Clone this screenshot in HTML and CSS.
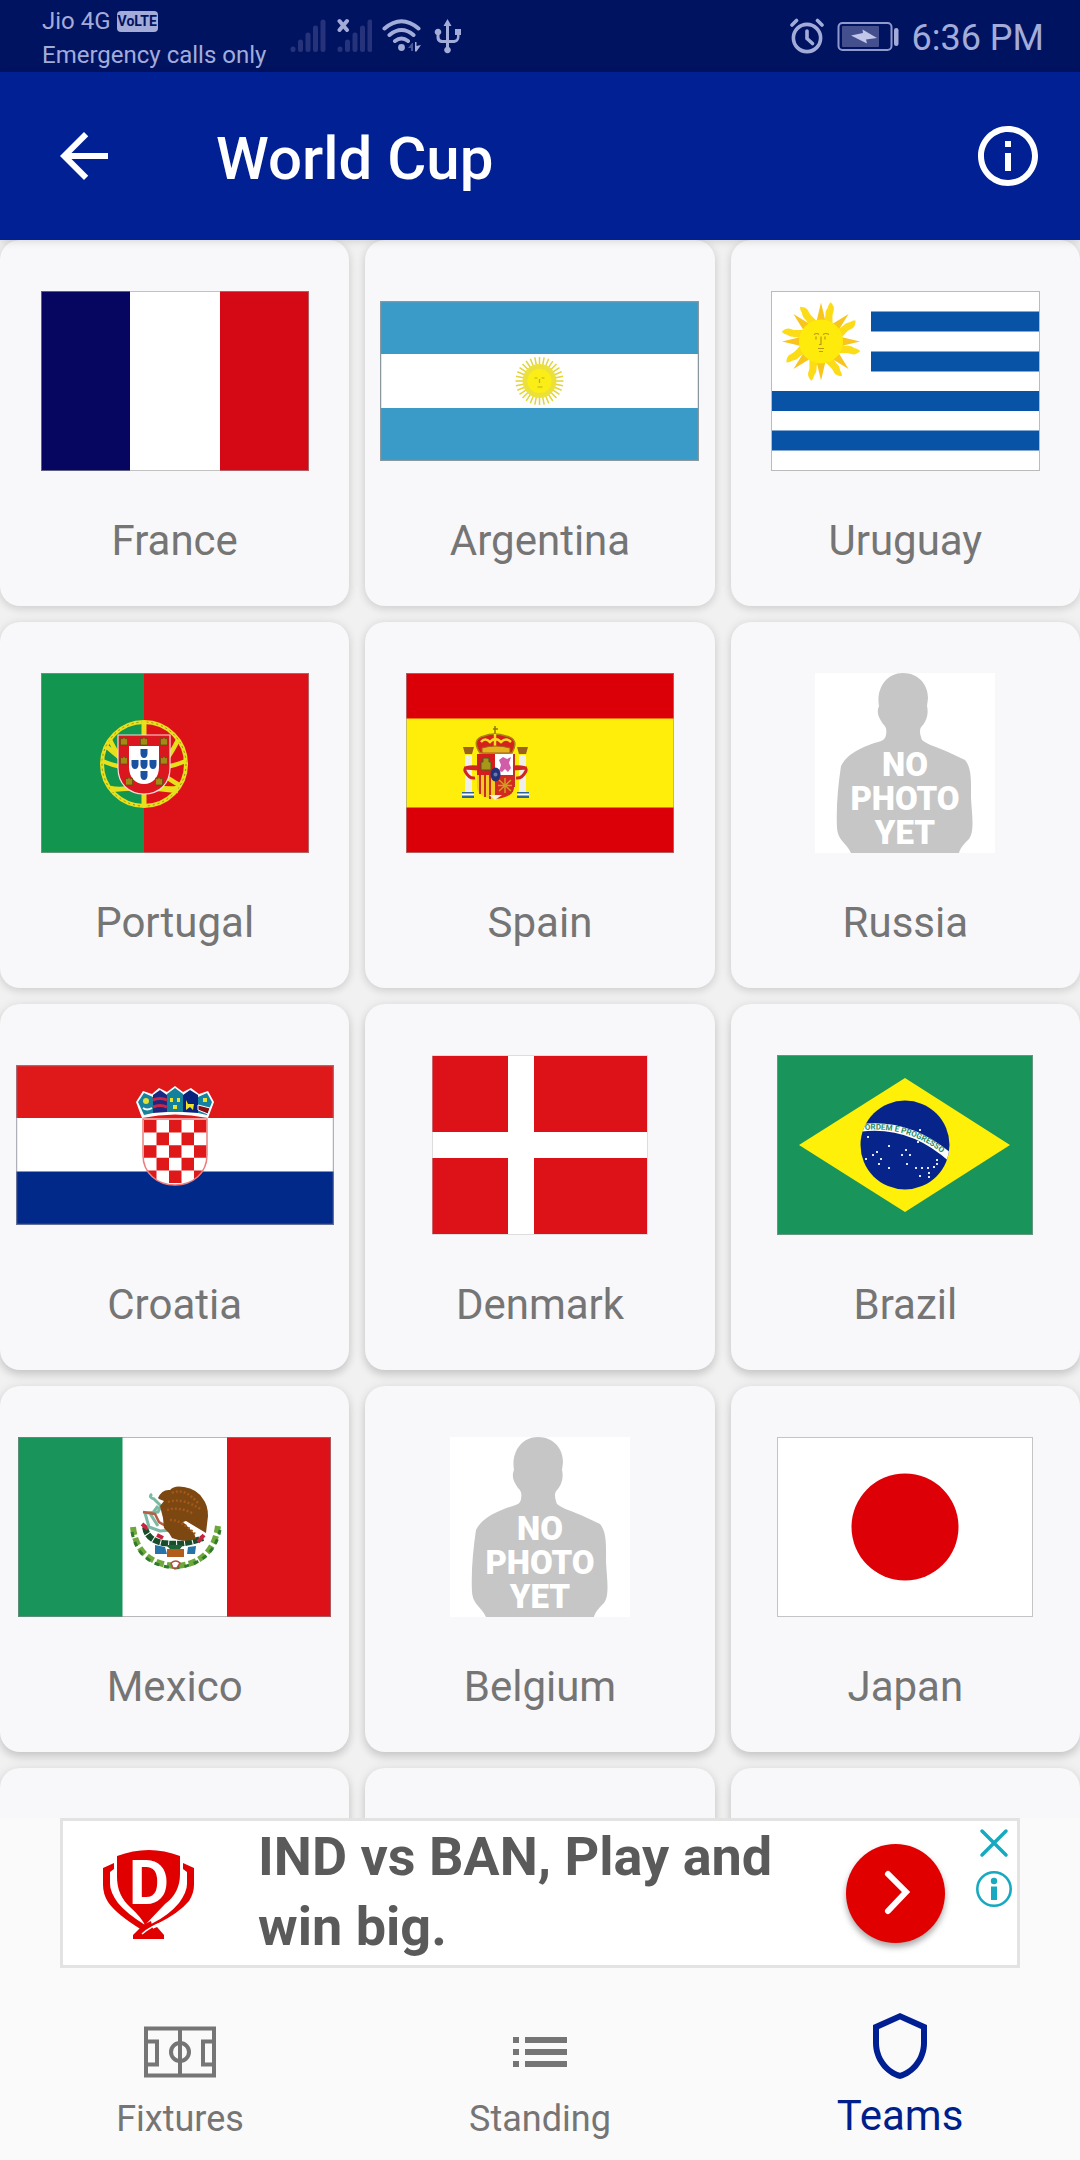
FILE: index.html
```html
<!DOCTYPE html>
<html lang="en">
<head>
<meta charset="utf-8">
<meta name="viewport" content="width=device-width, initial-scale=1">
<title>World Cup</title>
<link rel="stylesheet" href="styles.css">
</head>
<body>
<div class="status">
  <div class="carrier">
    <div class="carrier-line">Jio 4G <span class="volte">VoLTE</span></div>
    <div class="carrier-line">Emergency calls only</div>
  </div>
  <div class="status-icons">
    <svg width="37" height="36" viewBox="0 0 37 36" stroke="#26337a" stroke-width="5" stroke-linecap="round"><path d="M3 31v.5M10.500 24v7.500M18 17v14.500M25.500 10v21.500M33 4v27.500"/></svg>
    <svg width="35" height="36" viewBox="0 0 35 36" stroke="#26337a" stroke-width="5" stroke-linecap="round"><path d="M3 31v.5M10.500 24v7.500M18 17v14.500M25.500 10v21.500M33 4v27.500"/><path d="M2.500 3l7.500 9M10 3l-7.500 9" stroke="#a3acd9" stroke-width="4"/></svg>
    <svg width="40" height="36" viewBox="0 0 40 36" fill="none" stroke="#a3acd9" stroke-width="4" stroke-linecap="round"><path d="M2.500 10.500Q19.500-4 36.500 10.500M7.500 17Q19.500 7 31.500 17M13 23Q19.500 18 26 23"/><circle cx="19.500" cy="29.500" r="3.400" fill="#a3acd9" stroke="none"/><path d="M33 24h1.500v4l4.500-1-4.500 6.500H33z" fill="#a3acd9" stroke="none"/><path d="M31 25v8h-2v-3h-3l4-5z" fill="#4a5592" stroke="none"/></svg>
    <svg width="30" height="36" viewBox="0 0 30 36" fill="#a3acd9"><path d="M15.500 1l4 7h-2.500V22h4c3 0 4-1 4-4v-1h-2v-6h6v6h-1.500v1.500c0 4-2.500 6.500-6.500 6.500H17v4a3.300 3.300 0 1 1-3 0v-4h-3c-4.500 0-6.500-2-6.500-6v-2a3.300 3.300 0 1 1 3 0v1c0 3 1 4 4 4H14V8h-2.500z"/></svg>
  </div>
  <div class="status-right">
    <svg width="34" height="36" viewBox="0 0 34 36" fill="none" stroke="#a3acd9" stroke-width="3.600" stroke-linecap="round"><circle cx="17" cy="20" r="13.600"/><path d="M17 13v7.500l5.500 5"/><path d="M2 7l4.500-4.500M32 7l-4.500-4.500"/></svg>
    <svg width="62" height="36" viewBox="0 0 62 36" fill="none"><rect x="1.500" y="5" width="53" height="27" rx="4" stroke="#8f99cc" stroke-width="2"/><rect x="5" y="8" width="37" height="21" rx="1" fill="#444f8e"/><path d="M14 17.500L26 15l-.5-3.500L40 20l-11 1.500 1 4z" fill="#c0c7e8"/><rect x="57" y="10" width="4.500" height="18" rx="2.200" fill="#a3acd9"/></svg>
    <time class="clock">6:36 PM</time>
  </div>
</div>

<header class="appbar">
  <button class="icon-btn" aria-label="Back"><svg width="72" height="72" viewBox="0 0 24 24" fill="#fff"><path d="M20 11H7.830l5.590-5.590L12 4l-8 8 8 8 1.410-1.410L7.830 13H20v-2z"/></svg></button>
  <h1 class="title">World Cup</h1>
  <button class="icon-btn" aria-label="Information"><svg width="72" height="72" viewBox="0 0 24 24" fill="#fff"><path d="M11 7h2v2h-2zm0 4h2v6h-2zm1-9C6.480 2 2 6.480 2 12s4.480 10 10 10 10-4.480 10-10S17.520 2 12 2zm0 18c-4.410 0-8-3.590-8-8s3.590-8 8-8 8 3.590 8 8-3.590 8-8 8z"/></svg></button>
</header>

<main class="teams">
  <a class="card" href="#">
    <span class="flag"><svg width="268" height="180" viewBox="0 0 268 180"><rect width="268" height="180" fill="#fff"/><rect width="89" height="180" fill="#060560"/><rect x="179" width="89" height="180" fill="#d50816"/><rect x=".5" y=".5" width="267" height="179" fill="none" stroke="#999" stroke-opacity=".6"/></svg></span>
    <span class="name">France</span>
  </a>
  <a class="card" href="#">
    <span class="flag"><svg width="319" height="160" viewBox="0 0 319 160"><rect width="319" height="160" fill="#3a9bc8"/><rect y="53" width="319" height="54" fill="#fff"/>
      <g transform="translate(159.500 80)"><g stroke="#e3d437" stroke-width="1.500"><path id="rays" d="M0-24V24M-24 0H24M-17-17L17 17M17-17L-17 17"/><use href="#rays" transform="rotate(11.250)"/><use href="#rays" transform="rotate(22.500)"/><use href="#rays" transform="rotate(33.750)"/></g><circle r="17" fill="#ece13a"/><circle r="12" fill="#fbee16"/><path d="M-5-3h3M2-3h3M0-2v4M-2 6h5" stroke="#c4ae18" stroke-width="1.200"/></g>
      <rect x=".5" y=".5" width="318" height="159" fill="none" stroke="#8a979f" stroke-width="1.500"/></svg></span>
    <span class="name">Argentina</span>
  </a>
  <a class="card" href="#">
    <span class="flag"><svg width="269" height="180" viewBox="0 0 269 180"><rect width="269" height="180" fill="#fff"/><path d="M100 20.500h168v20H100zM100 60.500h168v20H100zM1 100h267v20H1zM1 139.500h267v20H1z" fill="#0853a5"/>
      <g transform="translate(50 50.500)"><g fill="#f8c51d"><path id="ray" d="M-5-18L0-39 5-18zM-5 18L0 39 5 18zM-18-5L-39 0-18 5zM18-5L39 0 18 5z"/><use href="#ray" transform="rotate(45)"/></g>
      <g fill="#fbdc16"><path id="wave" d="M-6-18c3-6-2-9-1-14 1-3-1-4 1-8 4 2 6 4 6 8s3 8 5 14zM6 18c-3 6 2 9 1 14-1 3 1 4-1 8-4-2-6-4-6-8s-3-8-5-14zM18-6c6 3 9-2 14-1 3 1 4-1 8 1-2 4-4 6-8 6s-8 3-14 5zM-18 6c-6-3-9 2-14 1-3-1-4 1-8-1 2-4 4-6 8-6s8-3 14-5z" transform="rotate(22.500)"/><use href="#wave" transform="rotate(45)"/></g>
      <circle r="22" fill="#ffeb0b"/><path d="M-7-7q3-2 5 0M2-7q3-2 6 0M-5-5v3M4-5v3M0-5v8h-2M-3 7h6M-2 10h4" fill="none" stroke="#b79a18" stroke-width="1.200"/></g>
      <rect x=".5" y=".5" width="268" height="179" fill="none" stroke="#bbb"/></svg></span>
    <span class="name">Uruguay</span>
  </a>
  <a class="card" href="#">
    <span class="flag"><svg width="268" height="180" viewBox="0 0 268 180"><rect width="268" height="180" fill="#dd1219"/><rect width="103" height="180" fill="#11954f"/>
      <g transform="translate(103 91)"><g fill="none" stroke="#e8e01c"><circle r="42" stroke-width="4"/><circle r="42" stroke="#8f8a1a" stroke-width="1" stroke-dasharray="2 3"/><path d="M0-43V43" stroke-width="5"/><path d="M-42-3Q0 14 42-3M-34-24Q-8 30 34 24M-34 24Q6 32 34-24M-37-17L-12 4M14 8L35 21M-34 26Q0 22 34 27" stroke-width="4.500"/></g>
      <path d="M-26-29H26V4C26 20 15 30 0 30S-26 20-26 4z" fill="#da171e" stroke="#f6dcda" stroke-width="1.200"/><path d="M-15-18H15V3C15 13 9 20 0 20S-15 13-15 3z" fill="#fff"/>
      <g fill="#1b529f"><path id="quina" d="M-3.500-4h7v5Q3 5 0 5T-3.500 1z"/><use href="#quina" y="-11"/><use href="#quina" y="11"/><use href="#quina" x="-9"/><use href="#quina" x="9"/></g>
      <defs><path id="castle" d="M-3.500 4v-7l2 1 1.500-2 1.500 2 2-1v7z"/></defs><g fill="#a28a14" stroke="#5e4a10" stroke-width=".7"><use href="#castle" x="-20" y="-23"/><use href="#castle" y="-23"/><use href="#castle" x="20" y="-23"/><use href="#castle" x="-20" y="-4"/><use href="#castle" x="20" y="-4"/><use href="#castle" x="-15" y="17"/><use href="#castle" x="15" y="17"/></g></g>
      <rect x=".5" y=".5" width="267" height="179" fill="none" stroke="#999" stroke-opacity=".6"/></svg></span>
    <span class="name">Portugal</span>
  </a>
  <a class="card" href="#">
    <span class="flag"><svg width="268" height="180" viewBox="0 0 268 180"><rect width="268" height="180" fill="#db0007"/><rect y="45.500" width="268" height="89" fill="#ffee0a"/>
      <path d="M89 53v8M87 56h5" stroke="#8c7a15" stroke-width="1.500"/><path d="M74 80q-9-14 4-17 10-4 22 0 14 3 6 17z" fill="#d3221d" stroke="#a98313" stroke-width="1.500"/><path d="M75 69q4-5 9 0 5-6 11 0 5-5 10 0M89 61v14" fill="none" stroke="#ffdc23" stroke-width="2.500"/><path d="M76 75q14-4 28 0v5H76z" fill="#e5b41c" stroke="#a4601a"/>
      <path d="M71 81h18v21H71z" fill="#d61d1d"/><path d="M89 81h19v21H89z" fill="#fff"/><path d="M71 102h18v24c-10-1-18-4-18-12z" fill="#f4ca22"/><path d="M89 102h19v12c0 8-8 11-19 12z" fill="#d22a22"/><path d="M74 102v19M79 102v22M84 102v24M108 81v33" stroke="#c92f20" stroke-width="2"/><path d="M75 97V89h2v-4h6v4h2v8z" fill="#aa951b" stroke="#475d20"/><path d="M93 98l2-6-2-5 4-3 4 2 4-2-2 6 2 5-3 4-3-3-3 3z" fill="#d15ca8"/><path d="M93 107l12 11M105 107L93 118M92 112.500h14M99 105v15" stroke="#cf9c22" stroke-width="1.500"/><ellipse cx="89.500" cy="101.500" rx="5" ry="7" fill="#23317a"/><circle cx="89.500" cy="101.500" r="2" fill="#6d78a5"/><path d="M83 122h13l-7 5z" fill="#f5f2d8"/>
      <g id="pillar"><path d="M59 82h7v37h-7z" fill="#efeee8"/><path d="M57 74h11l-2 7h-7z" fill="#9a621a"/><path d="M56 119h12v6H56z" fill="#2d6397"/><path d="M56 121.500h12" stroke="#fff" stroke-width="2"/><path d="M72 94q-15-1-13 4 4 8 10 7M72 96l-14-1" fill="none" stroke="#cf2525" stroke-width="3"/></g><use href="#pillar" transform="translate(179) scale(-1 1)"/>
      <rect x=".5" y=".5" width="267" height="179" fill="none" stroke="#999" stroke-opacity=".6"/></svg></span>
    <span class="name">Spain</span>
  </a>
  <a class="card" href="#">
    <span class="flag"><svg width="180" height="180" viewBox="0 0 180 180"><g id="nophoto"><rect width="180" height="180" fill="#fff"/><path d="M88 0c15 0 25 11 25 25l-1 8c2 8-1 16-5 20-4 4-1 11 0 14 6 5 15 7 26 12l17 8c7 8 6 23 6 38 1 18 4 35-3 42-6 6-8 9-9 13H36c-5-11-13-12-14-25-1-20 1-42 4-62C31 83 41 77 54 72c9-4 16-3 17-10 1-6 0-8-3-11-4-6-7-11-4-18-3-17 7-33 24-33z" fill="#c6c6c6"/></g><g class="nophoto-text"><text x="90" y="103">NO</text><text x="90" y="137">PHOTO</text><text x="90" y="171">YET</text></g></svg></span>
    <span class="name">Russia</span>
  </a>
  <a class="card" href="#">
    <span class="flag"><svg width="318" height="160" viewBox="0 0 318 160"><rect width="318" height="160" fill="#fff"/><rect width="318" height="53" fill="#df191a"/><rect y="106.500" width="318" height="54" fill="#00298a"/>
      <clipPath id="hr"><path d="M127 54h64v36c0 18-14 30-32 30s-32-12-32-30z"/></clipPath>
      <path d="M127 54h64v36c0 18-14 30-32 30s-32-12-32-30z" fill="#fff"/><g clip-path="url(#hr)" fill="#df191a"><path id="hrow" d="M128 55h12.500v12.500H128zM153 55h12.500v12.500H153zM178 55h12.500v12.500H178z"/><use href="#hrow" y="25.200"/><use href="#hrow" y="50.400"/><path id="hrow2" d="M140.500 67.500H153v12.700h-12.500zM165.500 67.500H178v12.700h-12.500z"/><use href="#hrow2" y="25.200"/></g><path d="M127 54h64v36c0 18-14 30-32 30s-32-12-32-30z" fill="none" stroke="#ec7d7d" stroke-width="1.500"/>
      <path d="M126 53l-6-16 7-11 9 3 7-6 8 4 8-6 8 6 8-4 8 6 9-3 6 11-6 16q-33-7-66 0z" fill="#fff"/><path d="M128 50l-6-13 6-9 9 4v16z" fill="#17819e"/><path d="M137 48V30l7-5 7 5v17z" fill="#1c2782"/><path d="M151 47V29l8-6 8 6v18z" fill="#13809c"/><path d="M167 47V30l7-5 8 5v18z" fill="#08237e"/><path d="M182 48V32l9-4 5 9-5 13z" fill="#1682a2"/><path d="M137 35q7-3 14 0M137 42q7-3 14 0" fill="none" stroke="#c92745" stroke-width="3"/><circle cx="130" cy="36" r="3" fill="#e2df36"/><path d="M127 43q4 3 9 0" stroke="#fff" stroke-width="2" fill="none"/><path d="M154 33h3v4h-3zM161 33h3v4h-3zM157 40h4v4h-4zM187 33h4v4h-4zM170 35l2 4h6l-1 6-3-3-4 3z" fill="#eee22b"/><path d="M182 40l12 3-2 6-10-4z" fill="#8b0d12" stroke="#fff"/>
      <rect x=".5" y=".5" width="317" height="159" fill="none" stroke="#8e8e9c" stroke-opacity=".7" stroke-width="1.500"/></svg></span>
    <span class="name">Croatia</span>
  </a>
  <a class="card" href="#">
    <span class="flag"><svg width="216" height="180" viewBox="0 0 216 180"><rect width="216" height="180" fill="#fff"/><path d="M0 1h76v76H0zM102 1h113v76H102zM0 103h76v76H0zM102 103h113v76H102z" fill="#dd1118"/><rect x=".5" y=".5" width="215" height="179" fill="none" stroke="#bbb" stroke-opacity=".5"/></svg></span>
    <span class="name">Denmark</span>
  </a>
  <a class="card" href="#">
    <span class="flag"><svg width="256" height="180" viewBox="0 0 256 180"><rect width="256" height="180" fill="#19945a"/><path d="M22 90L128 23l105 67-105 67z" fill="#fff00a"/><circle cx="128" cy="90" r="44.500" fill="#06248a"/><clipPath id="br"><circle cx="128" cy="90" r="44.500"/></clipPath><path d="M82 73Q133 66 175 104" fill="none" stroke="#fff" stroke-width="7.500" clip-path="url(#br)"/><path id="motto" d="M88 75Q134 71 171 103" fill="none"/><text class="motto"><textPath href="#motto">ORDEM E PROGRESSO</textPath></text>
      <path d="M90 82h2M111 91h2M95 100h2M103 104h2M101 109h2M111 113h2M128 95h2M124 100h2M132 100h2M129 109h2M138 113h2M144 113h2M150 113h2M156 112h2M159 105h2M159 109h2M142 75h2M140 87h2M142 121h2M151 118h2M151 122h2M88 104h2M99 97h2" stroke="#dfe5fb" stroke-width="1.800"/><rect x=".5" y=".5" width="255" height="179" fill="none" stroke="#999" stroke-opacity=".6"/></svg></span>
    <span class="name">Brazil</span>
  </a>
  <a class="card" href="#">
    <span class="flag"><svg width="313" height="180" viewBox="0 0 313 180"><rect width="313" height="180" fill="#fff"/><rect width="104.500" height="180" fill="#19945a"/><rect x="209" width="104" height="180" fill="#dd1219"/>
      <g transform="translate(-18 -37)">
        <path d="M133 127q4 36 42 39 38-2 43-40" fill="none" stroke="#6fa83a" stroke-width="6" stroke-dasharray="8 3"/><path d="M132 132q6 33 43 36 38-4 45-38" fill="none" stroke="#2f7b2c" stroke-width="3" stroke-dasharray="5 5"/>
        <path d="M145 127q2 13 18 16 20 3 40-5" fill="none" stroke="#174d2b" stroke-width="6" stroke-dasharray="7 1"/><path d="M142 124l6 5M157 135l6 3M198 142l6-7" stroke="#c82440" stroke-width="4"/>
        <path d="M152 94q-4 3 2 5l7 7-3 6-13 1 4 14 11 4 12-1M158 106l-7 9 7 11" fill="none" stroke="#7bb9a5" stroke-width="3"/><path d="M143 112l12 2 4 8 10 6" fill="none" stroke="#b65e46" stroke-width="2.500"/>
        <path d="M158 98q4-9 12-8 4-5 14-3 13 2 19 12 5 6 5 17l-2 17-5-3-15-9-3 1 11 11 2 6q-12 4-24-1l-3-5-5-5-1-10-3-12 4-5-5-2z" fill="#7c4711"/><path d="M172 93q12-6 26 10M168 102q14-5 34 8M167 110q12-4 27 4M170 120q10-1 25 14" fill="none" stroke="#a3591a" stroke-width="2.500" stroke-dasharray="2 2"/>
        <path d="M155 145l10 2 2 7h-12zM188 147l8-1-1 8h-8z" fill="#2773a8"/><path d="M167 149h17v8h-17z" fill="#b35a1d"/><path d="M166 145h17l-3 4h-10z" fill="#1d6434"/><path d="M171 163q5-4 9 0l-3 5h-4z" fill="#fff" stroke="#b84b45" stroke-width="1.500"/>
      </g><rect x=".5" y=".5" width="312" height="179" fill="none" stroke="#888" stroke-opacity=".6"/></svg></span>
    <span class="name">Mexico</span>
  </a>
  <a class="card" href="#">
    <span class="flag"><svg width="180" height="180" viewBox="0 0 180 180"><use href="#nophoto"/><g class="nophoto-text"><text x="90" y="103">NO</text><text x="90" y="137">PHOTO</text><text x="90" y="171">YET</text></g></svg></span>
    <span class="name">Belgium</span>
  </a>
  <a class="card" href="#">
    <span class="flag"><svg width="256" height="180" viewBox="0 0 256 180"><rect x=".5" y=".5" width="255" height="179" fill="#fff" stroke="#c4c4c4"/><circle cx="128" cy="90" r="53.500" fill="#dd0007"/></svg></span>
    <span class="name">Japan</span>
  </a>
  <div class="card"></div>
  <div class="card"></div>
  <div class="card"></div>
</main>

<footer class="bottom">
  <aside class="ad">
    <svg class="ad-logo" width="92" height="92" viewBox="0 0 92 92" fill="#e00000"><path d="M14 9Q46-3 77 9V27Q77 46 62 57L42 78Q38 70 27 60 14 48 14 30z"/><path d="M0 21L11 16v6l-4 3v12q0 8 8 19 8 10 27 22l-3 5Q13 67 5 55 0 47 0 38z"/><path d="M91 21L80 16v6l4 3v12q0 8-8 19-10 12-26 20-10 5-20 13v3l7-4 17-11Q76 66 86 54q5-8 5-16z"/><path d="M30 88L40 78l8-4 2 8-12 5 16-7 7 8v4H30z"/><path d="M39 87q9-8 22-12" fill="none" stroke="#fff" stroke-width="1.500"/><text class="ad-letter" x="46" y="57">D</text></svg>
    <p class="ad-text">IND vs BAN, Play and win big.</p>
    <button class="ad-go" aria-label="Open"><svg width="34" height="48" viewBox="0 0 34 48" fill="none" stroke="#fff" stroke-width="6" stroke-linecap="round"><path d="M9 5l18 18L9 42"/></svg></button>
    <div class="ad-controls">
      <button class="ad-ctl" aria-label="Close ad"><svg width="36" height="36" viewBox="0 0 36 36" stroke="#17a9bf" stroke-width="3.500" stroke-linecap="round"><path d="M6 5l24 24M30 5L6 29"/></svg></button>
      <button class="ad-ctl" aria-label="About this ad"><svg width="36" height="36" viewBox="0 0 36 36" fill="#17a9bf"><circle cx="18" cy="18" r="16.700" fill="none" stroke="#17a9bf" stroke-width="2.600"/><circle cx="18" cy="10" r="3.200"/><path d="M15 15.500h6V29h-6z"/></svg></button>
    </div>
  </aside>
  <nav class="tabs">
    <a class="tab" href="#"><svg width="72" height="72" viewBox="0 0 72 72" fill="none" stroke="#757575" stroke-width="4"><path d="M2 12.500h68v47H2zM36 12v48M2 25.500h11v23H2M70 25.500H59v23h11"/><circle cx="36" cy="36" r="9"/></svg><span>Fixtures</span></a>
    <a class="tab" href="#"><svg width="72" height="72" viewBox="0 0 24 24" fill="#757575"><path d="M3 7h2v2H3zM3 11h2v2H3zM3 15h2v2H3zM7 7h14v2H7zM7 11h14v2H7zM7 15h14v2H7z"/></svg><span>Standing</span></a>
    <a class="tab active" href="#"><svg width="72" height="72" viewBox="0 0 24 24" fill="#001f92"><path d="M12 1L3 5v6c0 5.550 3.840 10.740 9 12 5.160-1.260 9-6.450 9-12V5l-9-4zm7 10c0 4.520-2.980 8.690-7 9.930-4.020-1.240-7-5.410-7-9.930V6.300l7-3.110 7 3.110V11z"/></svg><span>Teams</span></a>
  </nav>
</footer>
</body>
</html>
```
FILE: styles.css
```css
* {
  box-sizing: border-box;
}

body {
  margin: 0;
  height: 100vh;
  display: flex;
  flex-direction: column;
  background: #fafafa;
  color: #757575;
  font-family: Roboto, "Liberation Sans", sans-serif;
}

svg {
  display: block;
  flex: none;
}

a {
  color: inherit;
  text-decoration: none;
}

button {
  border: 0;
  padding: 0;
  background: none;
}

/* System status bar */
.status {
  display: flex;
  flex: none;
  align-items: center;
  gap: 24px;
  height: 72px;
  padding: 0 36px 0 42px;
  background: #001361;
  color: #a3acd9;
}

.carrier {
  padding-top: 4px;
}

.carrier-line {
  display: flex;
  align-items: center;
  gap: 6px;
  font-size: 24px;
  line-height: 34px;
  white-space: nowrap;
}

.volte {
  padding: 0 1px;
  border-radius: 4px;
  background: #a3acd9;
  color: #001361;
  font-size: 14px;
  font-weight: 700;
  line-height: 21px;
}

.status-icons {
  display: flex;
  gap: 10px;
}

.status-right {
  display: flex;
  align-items: center;
  gap: 13px;
  margin-left: auto;
}

.clock {
  padding-top: 3px;
  font-size: 36px;
  line-height: 42px;
}

/* App bar */
.appbar {
  position: relative;
  display: flex;
  flex: none;
  align-items: center;
  height: 168px;
  padding: 0 36px 0 48px;
  background: #002093;
  box-shadow: 0 1px 8px rgba(0, 0, 0, 0.15);
}

.title {
  flex: 1;
  margin: 0 0 0 96px;
  padding-top: 5px;
  color: #fff;
  font-size: 60px;
  font-weight: 500;
  line-height: 70px;
}

/* Team grid */
.teams {
  flex: 1;
  display: grid;
  grid-template-columns: repeat(3, 1fr);
  grid-auto-rows: 366px;
  gap: 16px;
  min-height: 0;
  overflow: hidden;
  background: #f1f1f1;
}

.card {
  display: flex;
  flex-direction: column;
  align-items: center;
  gap: 46px;
  padding-top: 51px;
  border-radius: 20px;
  background: #f8f8fa;
  box-shadow: 0 3px 8px rgba(0, 0, 0, 0.1), 0 0 12px rgba(0, 0, 0, 0.07);
}

.card:nth-child(n+7) {
  box-shadow: 0 5px 9px rgba(0, 0, 0, 0.14), 0 0 12px rgba(0, 0, 0, 0.07);
}

.flag {
  display: flex;
  align-items: center;
  height: 180px;
}

.name {
  font-size: 42px;
  line-height: 48px;
}

.nophoto-text {
  fill: #fff;
  font-size: 33px;
  font-weight: 900;
  text-anchor: middle;
}

.motto {
  fill: #2c8a63;
  font-size: 8px;
  font-weight: 700;
}

/* Ad banner and tabs */
.bottom {
  position: relative;
  flex: none;
  background: #fafafa;
}

.ad {
  display: flex;
  width: calc(100% - 120px);
  height: 150px;
  margin: 0 auto;
  padding-left: 40px;
  border: 3px solid #e3e3e3;
  background: #fff;
}

.ad-logo {
  align-self: center;
}

.ad-letter {
  fill: #fff;
  font-size: 62px;
  font-weight: 700;
  text-anchor: middle;
}

.ad-text {
  flex: 1;
  margin: 0 0 0 63px;
  padding-top: 1px;
  color: #5a5a5a;
  font-size: 54px;
  font-weight: 700;
  line-height: 70px;
}

.ad-go {
  display: flex;
  flex: none;
  align-items: center;
  justify-content: center;
  align-self: center;
  width: 99px;
  height: 99px;
  border-radius: 50%;
  background: #e00000;
  box-shadow: 0 4px 6px rgba(0, 0, 0, 0.35);
}

.ad-controls {
  display: flex;
  flex-direction: column;
  gap: 9px;
  margin: 5px 5px 0 31px;
}

.tabs {
  display: grid;
  grid-template-columns: repeat(3, 1fr);
  height: 192px;
}

.tab {
  display: flex;
  flex-direction: column;
  align-items: center;
  gap: 10px;
  padding-top: 48px;
  font-size: 36px;
  line-height: 42px;
}

.tab.active {
  padding-top: 42px;
  color: #001f8c;
  font-size: 42px;
  line-height: 48px;
}
```
